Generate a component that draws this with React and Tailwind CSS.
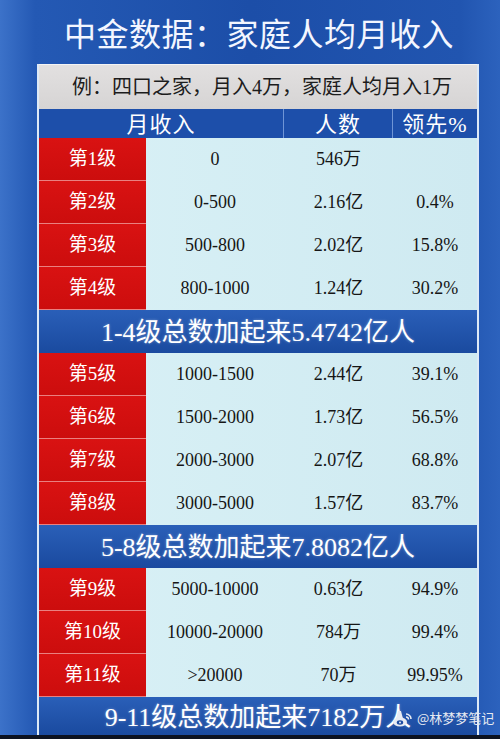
const ROWS_A = [
  ["第1级", "0", "546万", ""],
  ["第2级", "0-500", "2.16亿", "0.4%"],
  ["第3级", "500-800", "2.02亿", "15.8%"],
  ["第4级", "800-1000", "1.24亿", "30.2%"],
];
const ROWS_B = [
  ["第5级", "1000-1500", "2.44亿", "39.1%"],
  ["第6级", "1500-2000", "1.73亿", "56.5%"],
  ["第7级", "2000-3000", "2.07亿", "68.8%"],
  ["第8级", "3000-5000", "1.57亿", "83.7%"],
];
const ROWS_C = [
  ["第9级", "5000-10000", "0.63亿", "94.9%"],
  ["第10级", "10000-20000", "784万", "99.4%"],
  ["第11级", ">20000", "70万", "99.95%"],
];

function Row({ row }) {
  const [level, income, people, lead] = row;
  return (
    <div className="grid grid-cols-[107px_138px_109px_84px] h-[43px]">
      <div className="flex items-center justify-center bg-[linear-gradient(180deg,#d91212,#cc0d0d)] border-b border-[#e98080] text-white text-[19px]">
        {level}
      </div>
      <div className="flex items-center justify-center text-[18px] text-[#161616]">{income}</div>
      <div className="flex items-center justify-center text-[18px] text-[#161616]">{people}</div>
      <div className="flex items-center justify-center text-[18px] text-[#161616]">{lead}</div>
    </div>
  );
}

function Block({ rows }) {
  return (
    <div className="bg-[linear-gradient(90deg,#d9f1f6,#cfeaf1)]">
      {rows.map((r) => (
        <Row key={r[0]} row={r} />
      ))}
    </div>
  );
}

function Summary({ children, h = "h-[43px]" }) {
  return (
    <div
      className={`${h} flex items-center justify-center pt-[2px] bg-[linear-gradient(180deg,#2a5fb8,#1a4a9f)] text-white text-[26px] [text-shadow:0_0_3px_rgba(255,255,255,0.35)]`}
    >
      {children}
    </div>
  );
}

function WeiboMark() {
  return (
    <svg width="22" height="20" viewBox="0 0 22 20">
      <path d="M6 3 L9 3 L12 15 L3 16 Z" fill="#e8ecf3" />
      <ellipse cx="8" cy="14" rx="7" ry="4.5" fill="#e8ecf3" />
      <ellipse cx="8" cy="14.5" rx="3.2" ry="2.2" fill="#1d4ca3" />
      <circle cx="8" cy="14.5" r="1" fill="#e8ecf3" />
      <path d="M14 6 a5 5 0 0 1 5 5" stroke="#e8ecf3" strokeWidth="1.6" fill="none" />
      <path d="M14 9 a2.5 2.5 0 0 1 2.5 2.5" stroke="#e8ecf3" strokeWidth="1.4" fill="none" />
    </svg>
  );
}

export default function App() {
  return (
    <div className="relative w-[500px] h-[739px] overflow-hidden flex flex-col bg-[linear-gradient(90deg,#3c72c9_0%,#2459b4_7%,#1c4ea8_50%,#2155b0_92%,#2c62bd_100%)] font-['Liberation_Serif','Noto_Sans_CJK_SC',serif]">
      {/* Title */}
      <div className="h-[64px] flex items-center justify-center pl-[18px] text-[32px] text-[#f3f6ff] font-['Noto_Sans_CJK_SC',sans-serif] tracking-[0.5px]">
        中金数据：家庭人均月收入
      </div>

      <div className="mx-[37px] w-[442px] flex flex-col border-x-2 border-[#dde9f6]">
        {/* Example */}
        <div className="h-[45px] flex items-center justify-center pl-[8px] bg-[linear-gradient(180deg,#e2e0e0,#d6d4d4)] border-t border-[#f4f4f4] text-[20px] text-[#1c1c1c]">
          例：四口之家，月入4万，家庭人均月入1万
        </div>

        {/* Header */}
        <div className="grid grid-cols-[245px_109px_84px] h-[29px] bg-[#1d4faa] text-white text-[22px] leading-none tracking-[1px]">
          <div className="flex items-end justify-center pb-[2px] border-r border-[#6f95d6]">月收入</div>
          <div className="flex items-end justify-center pb-[2px] border-r border-[#6f95d6]">人数</div>
          <div className="flex items-end justify-center pb-[2px]">领先%</div>
        </div>

        <Block rows={ROWS_A} />
        <Summary>1-4级总数加起来5.4742亿人</Summary>
        <Block rows={ROWS_B} />
        <Summary>5-8级总数加起来7.8082亿人</Summary>
        <Block rows={ROWS_C} />
        <Summary h="h-[38px]">9-11级总数加起来7182万人</Summary>
      </div>

      <div className="flex-1 bg-[#0c1220]" />

      {/* Watermark */}
      <div className="absolute left-[392px] top-[708px] flex items-center gap-[3px] text-[13px] text-[#e6eaf2] font-['Noto_Sans_CJK_SC',sans-serif]">
        <WeiboMark />
        <span>@林梦梦笔记</span>
      </div>
    </div>
  );
}
